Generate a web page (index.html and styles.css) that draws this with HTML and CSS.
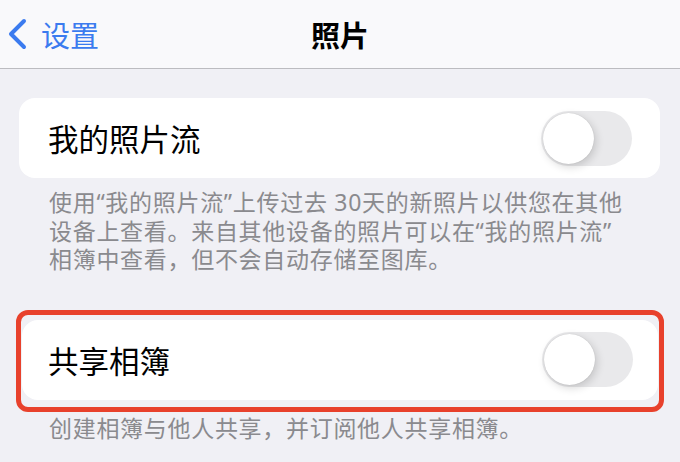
FILE: index.html
```html
<!DOCTYPE html>
<html>
<head>
    <title>照片</title>
    <link rel="stylesheet" href="styles.css">
</head>
<body>
    <div class="navbar">
        <a class="back" href="#">
            <svg class="chevron" width="22" height="32" viewBox="0 0 22 32">
                <polyline points="17,3 4,16 17,29" fill="none" stroke="currentColor" stroke-width="4" stroke-linecap="round" stroke-linejoin="round"/>
            </svg>
            <span>设置</span>
        </a>
        <div class="title">照片</div>
        <div></div>
    </div>

    <div class="content">
        <div class="card">
            <span class="label">我的照片流</span>
            <span class="switch"><span class="knob"></span></span>
        </div>
        <p class="note">使用“我的照片流”上传过去 30天的新照片以供您在其他<br>设备上查看。来自其他设备的照片可以在“我的照片流”<br>相簿中查看，但不会自动存储至图库。</p>

        <div class="highlight">
            <div class="card">
                <span class="label">共享相簿</span>
                <span class="switch"><span class="knob"></span></span>
            </div>
        </div>
        <p class="note note-tight">创建相簿与他人共享，并订阅他人共享相簿。</p>
    </div>
</body>
</html>
```

FILE: styles.css
```css
body { margin: 0; background: #f0f0f5; font-family: "Noto Sans CJK SC", "Noto Sans", sans-serif; height: 462px; overflow: hidden; }
.navbar { display: grid; grid-template-columns: 1fr auto 1fr; align-items: center; height: 68px; background: #f9f9fb; border-bottom: 1px solid #bcbcc0; }
.back { display: flex; align-items: center; gap: 12px; padding-left: 7px; color: #3b7bef; text-decoration: none; font-size: 29px; }
.chevron { display: block; }
.title { font-size: 29px; font-weight: 700; color: #000; }
.content { padding: 29px 20px 0 19px; }
.card { display: flex; align-items: center; justify-content: space-between; height: 80px; padding: 0 28px 0 29px; background: #fff; border-radius: 16px; }
.label { font-size: 30.5px; color: #000; }
.switch { display: flex; align-items: center; width: 91px; height: 55px; padding: 0 2px; box-sizing: border-box; background: #e9e9eb; border-radius: 28px; }
.knob { width: 51px; height: 51px; border-radius: 50%; background: #fff; box-shadow: 2px 3px 8px rgba(0,0,0,0.16), 0 0 1px rgba(0,0,0,0.2); }
.note { margin: 10px 0 0 30px; font-family: "Noto Sans", "Noto Sans CJK SC", sans-serif; font-size: 23px; letter-spacing: 0.7px; line-height: 28.5px; color: #8a8a8e; }
.highlight { margin: 36px -4px 0 -3px; padding: 5px 1px 7px; border: 5px solid #e8412c; border-radius: 12px; }
.highlight .card { padding: 0 25px 0 26px; }
.note-tight { margin-top: 2px; }
```
